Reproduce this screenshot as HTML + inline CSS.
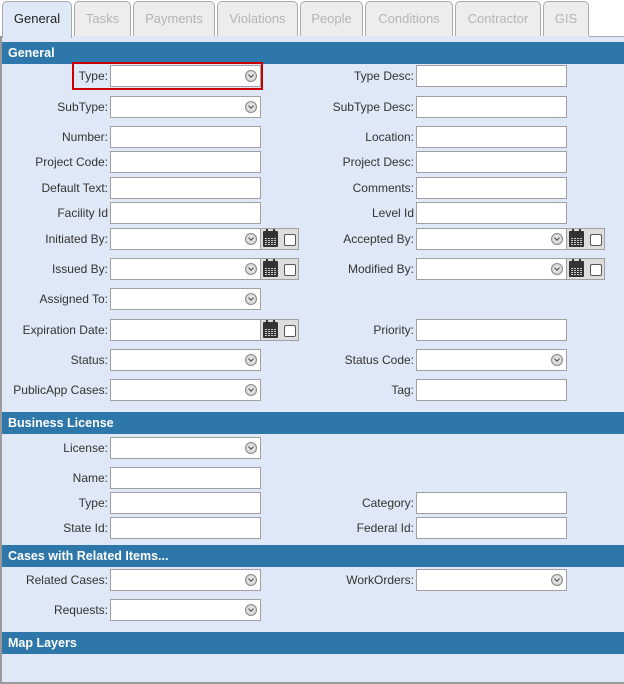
<!DOCTYPE html><html><head><style>
body{margin:0;width:624px;height:684px;background:#fff;font-family:"Liberation Sans",Arial,sans-serif;font-size:12px;color:#333;position:relative;overflow:hidden}
.tab{position:absolute;top:1px;height:35px;border:1px solid #aaa;border-bottom:none;border-radius:5px 5px 0 0;background:#ededed;color:#b5b5b5;font-size:13px;text-align:center;line-height:33px;box-sizing:border-box}
.tab.a{background:#dfe8f6;color:#222;height:37px}
.panel{position:absolute;left:0;top:36px;width:624px;height:648px;border-left:2px solid #999;border-bottom:2px solid #999;box-sizing:border-box;background:#dfe8f6}
.h{position:absolute;left:2px;width:622px;height:22px;background:#2e77aa;color:#fff;font-weight:bold;font-size:12.5px;line-height:22px;padding-left:6px;box-sizing:border-box}
.l,.r{position:absolute;height:22px;line-height:22px;text-align:right}
.l{left:0;width:108px}.r{left:300px;width:114px}
.i{position:absolute;width:151px;height:22px;background:#fff;border:1px solid #a0a0a0;box-sizing:border-box}
.d::after{content:"";position:absolute;right:3px;top:4px;width:10px;height:10px;border:1px solid #888;border-radius:50%;background:radial-gradient(circle,#eee,#ccc)}
.d::before{content:"";position:absolute;right:7px;top:7px;width:3px;height:3px;border-right:1.5px solid #444;border-bottom:1.5px solid #444;transform:rotate(45deg);z-index:2}
.c{position:absolute;width:38px;height:22px;background:#ddd;border:1px solid #a0a0a0;border-left:none;box-sizing:border-box}
.c i{position:absolute;left:2px;top:2px;width:15px;height:16px;background:#333;border-radius:1px}
.c i::before{content:"";position:absolute;left:2px;top:6px;width:11px;height:8px;background:repeating-linear-gradient(90deg,transparent 0 2px,#333 2px 3px),repeating-linear-gradient(0deg,#ccc 0 1px,#333 1px 2px)}
.c i::after{content:"";position:absolute;left:3px;top:-2px;width:9px;height:3px;border-left:2px solid #333;border-right:2px solid #333;box-sizing:border-box}
.c b{position:absolute;left:23px;top:5px;width:12px;height:12px;background:#fff;border:1px solid #555;border-radius:2px;box-sizing:border-box}
.sel{position:absolute;left:72px;top:62px;width:191px;height:28px;border:2px solid #c00;box-sizing:border-box}
</style></head><body>
<div class="panel"></div>
<div class="tab a" style="left:2px;width:70px;font-weight:normal">General</div>
<div class="tab" style="left:74px;width:57px">Tasks</div>
<div class="tab" style="left:133px;width:82px">Payments</div>
<div class="tab" style="left:217px;width:81px">Violations</div>
<div class="tab" style="left:300px;width:63px">People</div>
<div class="tab" style="left:365px;width:88px">Conditions</div>
<div class="tab" style="left:455px;width:86px">Contractor</div>
<div class="tab" style="left:543px;width:46px">GIS</div>
<div style="position:absolute;left:589px;top:36px;width:35px;height:1px;background:#aaa"></div>

<div class="h" style="top:42px">General</div>
<div class="sel"></div>
<div class="l" style="top:65px">Type:</div><div class="i d" style="left:110px;top:65px"></div>
<div class="r" style="top:65px">Type Desc:</div><div class="i" style="left:416px;top:65px"></div>
<div class="l" style="top:96px">SubType:</div><div class="i d" style="left:110px;top:96px"></div>
<div class="r" style="top:96px">SubType Desc:</div><div class="i" style="left:416px;top:96px"></div>
<div class="l" style="top:126px">Number:</div><div class="i" style="left:110px;top:126px"></div>
<div class="r" style="top:126px">Location:</div><div class="i" style="left:416px;top:126px"></div>
<div class="l" style="top:151px">Project Code:</div><div class="i" style="left:110px;top:151px"></div>
<div class="r" style="top:151px">Project Desc:</div><div class="i" style="left:416px;top:151px"></div>
<div class="l" style="top:177px">Default Text:</div><div class="i" style="left:110px;top:177px"></div>
<div class="r" style="top:177px">Comments:</div><div class="i" style="left:416px;top:177px"></div>
<div class="l" style="top:202px">Facility Id</div><div class="i" style="left:110px;top:202px"></div>
<div class="r" style="top:202px">Level Id</div><div class="i" style="left:416px;top:202px"></div>
<div class="l" style="top:228px">Initiated By:</div><div class="i d" style="left:110px;top:228px"></div><div class="c" style="left:261px;top:228px"><i></i><b></b></div>
<div class="r" style="top:228px">Accepted By:</div><div class="i d" style="left:416px;top:228px"></div><div class="c" style="left:567px;top:228px"><i></i><b></b></div>
<div class="l" style="top:258px">Issued By:</div><div class="i d" style="left:110px;top:258px"></div><div class="c" style="left:261px;top:258px"><i></i><b></b></div>
<div class="r" style="top:258px">Modified By:</div><div class="i d" style="left:416px;top:258px"></div><div class="c" style="left:567px;top:258px"><i></i><b></b></div>
<div class="l" style="top:288px">Assigned To:</div><div class="i d" style="left:110px;top:288px"></div>
<div class="l" style="top:319px">Expiration Date:</div><div class="i" style="left:110px;top:319px"></div><div class="c" style="left:261px;top:319px"><i></i><b></b></div>
<div class="r" style="top:319px">Priority:</div><div class="i" style="left:416px;top:319px"></div>
<div class="l" style="top:349px">Status:</div><div class="i d" style="left:110px;top:349px"></div>
<div class="r" style="top:349px">Status Code:</div><div class="i d" style="left:416px;top:349px"></div>
<div class="l" style="top:379px">PublicApp Cases:</div><div class="i d" style="left:110px;top:379px"></div>
<div class="r" style="top:379px">Tag:</div><div class="i" style="left:416px;top:379px"></div>

<div class="h" style="top:412px">Business License</div>
<div class="l" style="top:437px">License:</div><div class="i d" style="left:110px;top:437px"></div>
<div class="l" style="top:467px">Name:</div><div class="i" style="left:110px;top:467px"></div>
<div class="l" style="top:492px">Type:</div><div class="i" style="left:110px;top:492px"></div>
<div class="r" style="top:492px">Category:</div><div class="i" style="left:416px;top:492px"></div>
<div class="l" style="top:517px">State Id:</div><div class="i" style="left:110px;top:517px"></div>
<div class="r" style="top:517px">Federal Id:</div><div class="i" style="left:416px;top:517px"></div>

<div class="h" style="top:545px">Cases with Related Items...</div>
<div class="l" style="top:569px">Related Cases:</div><div class="i d" style="left:110px;top:569px"></div>
<div class="r" style="top:569px">WorkOrders:</div><div class="i d" style="left:416px;top:569px"></div>
<div class="l" style="top:599px">Requests:</div><div class="i d" style="left:110px;top:599px"></div>

<div class="h" style="top:632px">Map Layers</div>
</body></html>
